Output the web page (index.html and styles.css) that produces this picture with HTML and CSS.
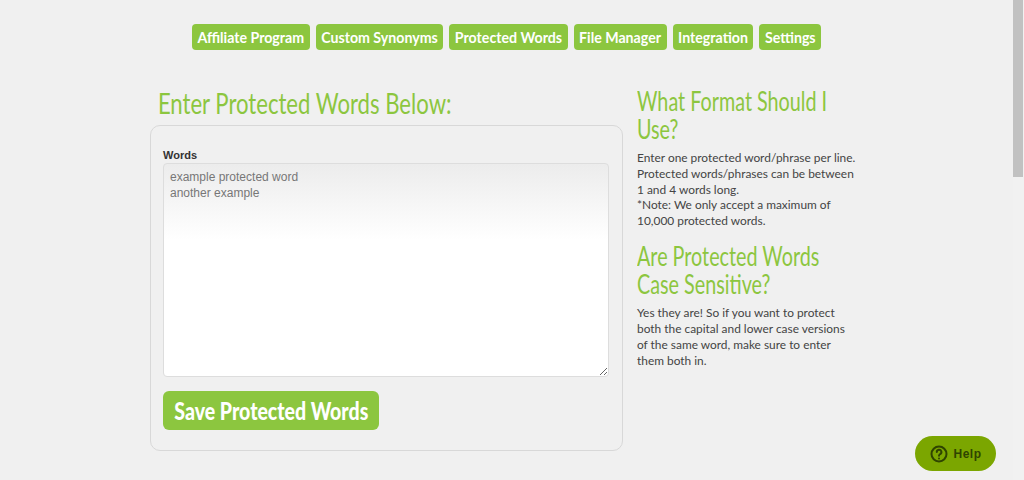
FILE: index.html
```html
<!DOCTYPE html>
<html lang="en">
<head>
    <meta charset="UTF-8">
    <title>Protected Words</title>
    <link rel="stylesheet" href="styles.css">
</head>
<body>
    <nav class="nav">
        <a class="nav-btn" href="#">Affiliate Program</a>
        <a class="nav-btn" href="#">Custom Synonyms</a>
        <a class="nav-btn" href="#">Protected Words</a>
        <a class="nav-btn" href="#">File Manager</a>
        <a class="nav-btn" href="#">Integration</a>
        <a class="nav-btn" href="#">Settings</a>
    </nav>

    <div class="container">
        <div class="main">
            <h1>Enter Protected Words Below:</h1>
            <form class="panel">
                <label class="field-label" for="words">Words</label>
                <textarea id="words" class="words" placeholder="example protected word&#10;another example"></textarea>
                <button type="button" class="save-btn"><span>Save Protected Words</span></button>
            </form>
        </div>
        <div class="side">
            <h2>What Format Should I<br>Use?</h2>
            <p>Enter one protected word/phrase per line. Protected words/phrases can be between 1 and 4 words long.<br>*Note: We only accept a maximum of 10,000 protected words.</p>
            <h2>Are Protected Words<br>Case Sensitive?</h2>
            <p>Yes they are! So if you want to protect<br>both the capital and lower case versions<br>of the same word, make sure to enter<br>them both in.</p>
        </div>
    </div>

    <a class="help" href="#">
        <svg class="help-icon" width="20" height="20" viewBox="0 0 20 20" fill="none" stroke="#2f4400" stroke-width="2" stroke-linecap="round">
            <circle cx="10" cy="10" r="7.5"/>
            <path d="M7.8 8a2.3 2.3 0 1 1 3.4 2c-.8.5-1.2.9-1.2 1.7"/>
            <path d="M10 14.4v.1"/>
        </svg>
        Help
    </a>

    <div class="scrollbar"><div class="thumb"></div></div>
</body>
</html>
```

FILE: styles.css
```css
html, body {
    height: 100%;
    overflow: hidden;
}
body {
    margin: 0;
    padding-right: 11px;
    box-sizing: border-box;
    background: #f0f0f0;
    font-family: 'Lato', sans-serif;
    color: #444;
}
.nav {
    display: flex;
    justify-content: center;
    gap: 6px;
    padding-top: 24px;
}
.nav-btn {
    padding: 0 5.5px;
    height: 26px;
    line-height: 27px;
    background: #8cc63f;
    color: #fff;
    font-size: 14.2px;
    font-weight: bold;
    text-decoration: none;
    border-radius: 4px;
}
.container {
    display: flex;
    width: 713px;
    margin: 0 auto;
    padding-top: 36px;
}
.main {
    width: 473px;
    margin-right: 14px;
}
h1, h2 {
    margin: 0;
    color: #8cc63f;
    font-family: 'Lato', sans-serif;
    font-weight: normal;
    white-space: nowrap;
    transform-origin: left center;
}
h1 {
    font-size: 28px;
    line-height: 34px;
    padding-left: 10px;
    margin-bottom: 5px;
    transform: scaleX(0.79);
}
.panel {
    height: 326px;
    box-sizing: border-box;
    padding: 22px 12px 0;
    border: 1px solid #d8d8d8;
    border-radius: 10px;
}
.field-label {
    display: block;
    margin-bottom: 1px;
    font-family: 'Liberation Sans', sans-serif;
    font-size: 11px;
    font-weight: bold;
    line-height: 14px;
    color: #333;
}
.words {
    display: block;
    width: 446px;
    height: 214px;
    box-sizing: border-box;
    padding: 5px 6px;
    border: 1px solid #ddd;
    border-radius: 4px;
    background: linear-gradient(#ececec, #fff 36%);
    font-family: 'Liberation Sans', sans-serif;
    font-size: 12px;
    line-height: 16px;
}
.words::placeholder {
    color: #777;
    opacity: 1;
}
.save-btn {
    display: flex;
    justify-content: center;
    align-items: center;
    margin-top: 14px;
    width: 216px;
    height: 39px;
    padding: 0 0 2px;
    border: none;
    border-radius: 6px;
    background: #8cc63f;
    color: #fff;
    font-family: 'Lato', sans-serif;
    font-size: 25px;
    font-weight: 900;
    white-space: nowrap;
}
.save-btn span {
    flex: none;
    transform: scaleX(0.78);
}
.side {
    width: 223px;
    padding-right: 3px;
}
.side h2 {
    font-size: 26px;
    line-height: 28px;
    margin-top: 1px;
    transform: scaleX(0.76);
}
.side p {
    margin: 7px 0 13.5px;
    font-size: 11.9px;
    line-height: 15.75px;
}
.help {
    position: fixed;
    left: 915px;
    top: 436px;
    width: 81px;
    height: 35px;
    display: flex;
    align-items: center;
    justify-content: center;
    gap: 4px;
    border-radius: 18px;
    background: #7ba600;
    color: #2f4400;
    font-family: 'Liberation Sans', sans-serif;
    font-size: 12px;
    font-weight: bold;
    letter-spacing: 0.5px;
    text-decoration: none;
}
.scrollbar {
    position: fixed;
    top: 0;
    right: 0;
    width: 11px;
    height: 100%;
    background: #f1f1f1;
}
.thumb {
    width: 10px;
    height: 177px;
    background: #c1c1c1;
}
```
